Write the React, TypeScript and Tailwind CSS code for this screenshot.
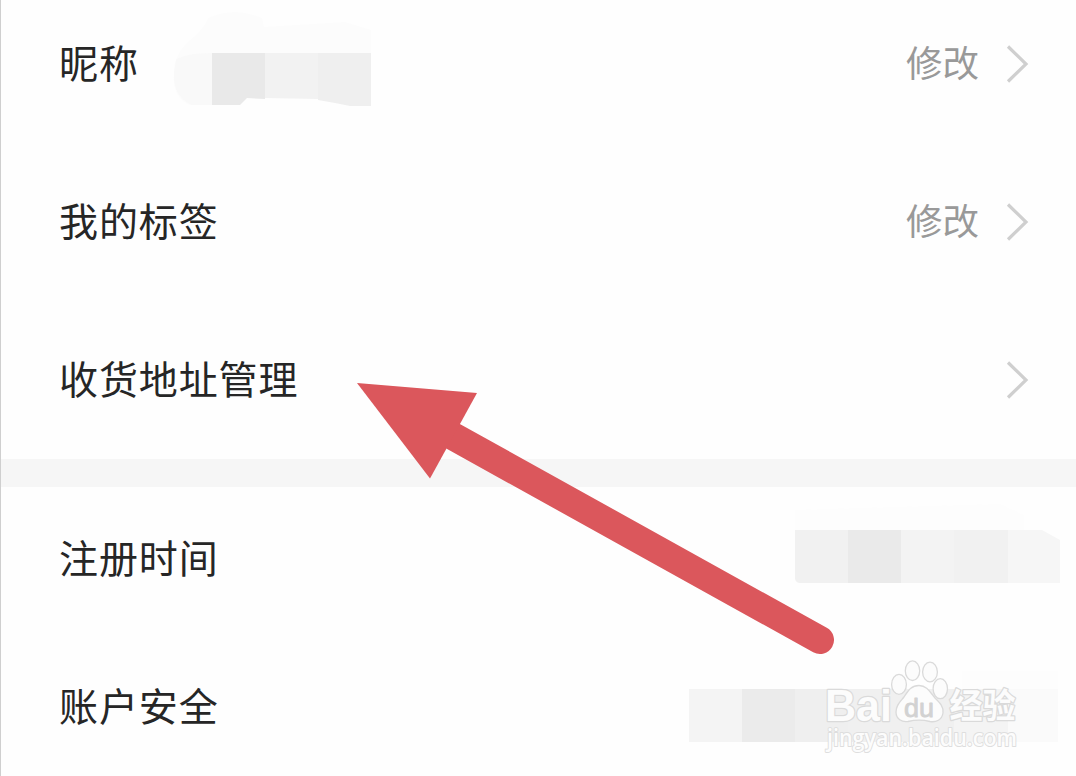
import type { ReactNode } from 'react';

interface SettingRowProps {
  label: string;
  className: string;
  action?: string;
  arrow?: boolean;
  children?: ReactNode;
}

function ChevronIcon() {
  return (
    <svg width="24" height="42" viewBox="0 0 24 42" fill="none">
      <path d="M2 3.5 L20 21 L2 38.5" stroke="#cfcfcf" strokeWidth="3.2" />
    </svg>
  );
}

function SettingRow({ label, className, action, arrow, children }: SettingRowProps) {
  return (
    <div className={`flex items-center pl-[58px] ${className}`}>
      <span className="whitespace-nowrap pb-[6px] text-[39px] leading-none tracking-[0.9px] text-[#262626]">{label}</span>
      {children}
      {arrow && (
        <div className="ml-auto flex items-center gap-[27px] pr-[46px]">
          {action && <span className="pb-[4px] text-[36.5px] leading-none text-[#999999]">{action}</span>}
          <ChevronIcon />
        </div>
      )}
    </div>
  );
}

function NicknameMask() {
  return (
    <svg className="ml-[33px]" width="202" height="110" viewBox="172 9 202 110">
      <path d="M188 42 Q205 28 208 18 Q235 6 262 18 L264 27 L345 22 L371 30 V53 H212 V105 H190 Q172 98 174 72 Q174 55 188 42Z" fill="#fcfcfc" />
      <path d="M176 60 Q185 53 212 53 V105 H192 Q172 96 174 72Z" fill="#f9f9f9" />
      <path d="M212 53 H265 V99 L247 98 L240 105 H212Z" fill="#e9e9e9" />
      <path d="M265 53 H318 V99 L265 98Z" fill="#f2f2f2" />
      <path d="M318 53 H371 V106 H350 L335 103 L318 100Z" fill="#efefef" />
    </svg>
  );
}

function TimeMask() {
  return (
    <svg className="ml-auto mr-[14px]" width="268" height="118" viewBox="794 500 268 118">
      <path d="M795 510 L860 508 L1000 504 L1024 515 V530 H795Z" fill="#fdfdfd" />
      <path d="M795 530 H848 V583 H799 Q795 582 795 578Z" fill="#f1f1f1" />
      <path d="M848 530 H901 V583 H848Z" fill="#eaeaea" />
      <path d="M901 530 H954 V583 H901Z" fill="#f3f3f3" />
      <path d="M954 530 H1008 V583 H954Z" fill="#f1f1f1" />
      <path d="M1008 530 H1042 L1060 540 V583 H1008Z" fill="#f6f6f6" />
    </svg>
  );
}

function AccountMask() {
  return (
    <svg className="ml-auto mr-[14px]" width="374" height="72" viewBox="688 671 374 72">
      <path d="M962 671 H1058 V689 H962Z" fill="#fdfdfd" />
      <path d="M689 689 H742 V742 H689Z" fill="#f4f4f4" />
      <path d="M742 689 H795 V742 H742Z" fill="#ebebeb" />
      <path d="M795 689 H848 V742 H795Z" fill="#efefef" />
      <path d="M848 689 H954 V742 H848Z" fill="#f0f0f0" />
      <path d="M954 689 H1008 V742 H954Z" fill="#f4f4f4" />
      <path d="M1008 689 H1058 V742 H1008Z" fill="#fafafa" />
    </svg>
  );
}

function PointerArrow() {
  return (
    <svg className="absolute left-[349px] top-[375px]" width="490" height="285" viewBox="350 375 490 285">
      <path d="M453.5 436.5 L820 640" stroke="#db575c" strokeWidth="28" strokeLinecap="round" />
      <path d="M357 383 L477 393 L430 478.5Z" fill="#db575c" />
    </svg>
  );
}

function Watermark() {
  return (
    <svg
      className="absolute left-[815px] top-[654px]"
      width="212"
      height="106"
      viewBox="816 654 212 106"
      fill="#fcfcfc"
      stroke="#dadada"
      strokeWidth="1.3"
      strokeLinejoin="round"
    >
      <g className="font-['Liberation_Sans',sans-serif] font-bold" paintOrder="stroke" strokeWidth="2.4">
        <text x="825" y="720.5" fontSize="44" textLength="67" lengthAdjust="spacingAndGlyphs">Bai</text>
      </g>
      <g className="font-['Noto_Sans_CJK_SC',sans-serif] font-bold" paintOrder="stroke" strokeWidth="2.6">
        <text x="949.5" y="718" fontSize="34" textLength="66" lengthAdjust="spacingAndGlyphs">经验</text>
      </g>
      <ellipse cx="912.5" cy="670.7" rx="7.2" ry="9.8" />
      <ellipse cx="930" cy="672" rx="7.4" ry="9.8" />
      <ellipse cx="899" cy="684.4" rx="7.4" ry="10" />
      <ellipse cx="940.3" cy="688.7" rx="7.2" ry="10" />
      <path d="M919 685.5 C927 685.5 930 692 935 698 C940 703 944 707 943 713 C942 720 936 722.5 930 721.5 C922 719.5 916 719.5 908 721.5 C902 722.5 896 719 896 712 C896 705 900 702 904 697 C908 691 911 685.5 919 685.5Z" />
      <g className="font-['Liberation_Sans',sans-serif]" fill="#d2d2d2" stroke="#d2d2d2" strokeWidth="0.8">
        <text x="904" y="717" fontSize="25" textLength="30" lengthAdjust="spacingAndGlyphs">du</text>
      </g>
      <g className="font-['Open_Sans',sans-serif] font-semibold" paintOrder="stroke" stroke="#dedede" strokeWidth="2">
        <text x="827" y="746" fontSize="23" textLength="190" lengthAdjust="spacingAndGlyphs">jingyan.baidu.com</text>
      </g>
    </svg>
  );
}

export default function App() {
  return (
    <div className="relative h-[776px] w-[1076px] overflow-hidden border-l border-[#cfcfcf] bg-[#fefefe] font-['Noto_Sans_CJK_SC',sans-serif] antialiased">
      <div className="-mt-[15px]">
        <SettingRow label="昵称" className="h-[158px]" action="修改" arrow>
          <NicknameMask />
        </SettingRow>
        <SettingRow label="我的标签" className="h-[158px]" action="修改" arrow />
        <SettingRow label="收货地址管理" className="h-[158px]" arrow />
      </div>
      <div className="h-[28px] bg-[#f6f6f6]" />
      <div>
        <SettingRow label="注册时间" className="h-[144px]">
          <TimeMask />
        </SettingRow>
        <SettingRow label="账户安全" className="h-[152px]">
          <AccountMask />
        </SettingRow>
      </div>
      <PointerArrow />
      <Watermark />
    </div>
  );
}
